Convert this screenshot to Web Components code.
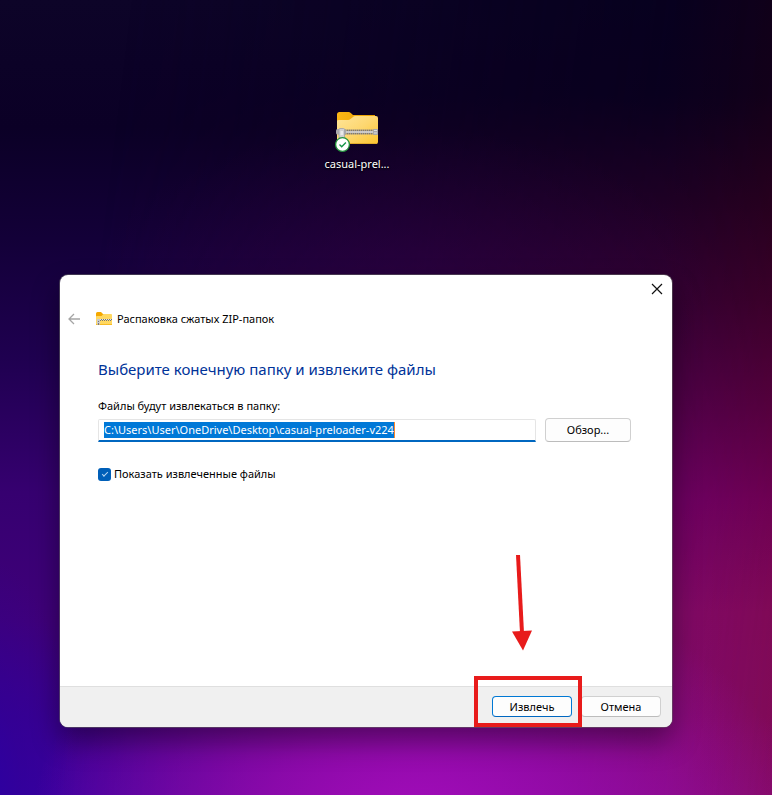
<!DOCTYPE html>
<html lang="ru">
<head>
<meta charset="utf-8">
<title>Распаковка сжатых ZIP-папок</title>
<style>
  body { margin: 0; font-family: "Noto Sans", "Open Sans", sans-serif; font-size: 11px; line-height: 16px; color: #000; }
</style>
</head>
<body>
<desk-top>
  <desktop-icon slot="icons" label="casual-prel..."></desktop-icon>
  <extract-wizard heading="Распаковка сжатых ZIP-папок"></extract-wizard>
</desk-top>

<script>
const define = (name, html, setup) => {
  const template = document.createElement('template');
  template.innerHTML = html;
  customElements.define(name, class extends HTMLElement {
    constructor() {
      super();
      this.attachShadow({ mode: 'open', delegatesFocus: true }).append(template.content.cloneNode(true));
    }
    connectedCallback() { if (setup) setup(this, this.shadowRoot); }
  });
};

define('zip-folder', `
  <style>
    :host { display: block; width: 44px; height: 44px; flex: none; }
    svg { display: block; width: 100%; height: 100%; }
    .small { display: none; }
    :host([small]) { width: 16px; height: 16px; }
    :host([small]) .large { display: none; }
    :host([small]) .small { display: block; }
  </style>
  <svg class="large" viewBox="0 0 44 44" aria-hidden="true">
    <defs>
      <linearGradient id="face" x1="0" y1="0" x2="1" y2="1"><stop offset="0" stop-color="#ffe59a"/><stop offset=".5" stop-color="#fdd770"/><stop offset="1" stop-color="#fcc52f"/></linearGradient>
      <linearGradient id="back" x1="0" y1="0" x2="1" y2="0"><stop offset="0" stop-color="#fbb616"/><stop offset="1" stop-color="#e9a000"/></linearGradient>
    </defs>
    <path d="M2 5.500Q2 3 4.500 3H13.500Q14.800 3 15.800 4L18 6H40V30H2Z" fill="url(#back)"/>
    <path d="M2 12Q2 11 4 11H13Q14.500 11 15.500 10L18 8Q19 7 20 7H41Q43 7 43 9V33Q43 35 41 35H4Q2 35 2 33Z" fill="url(#face)"/>
    <path d="M4 34.500H42" stroke="#e3ad2c" stroke-width="1"/>
    <rect x="3" y="20.500" width="40" height="5" fill="#b8a276"/>
    <path d="M10 21.500H39M10 24.500H39" stroke="#77777d" stroke-width="1.500" stroke-dasharray="1 1"/>
    <path d="M10 23H39" stroke="#cfcfd2" stroke-width="1.800"/>
    <rect x="38" y="20" width="5" height="6" rx="1" fill="#a7a7ab"/>
    <path d="M39 21.500H42M39 24H42" stroke="#dededf"/>
    <rect x="1" y="20" width="10" height="5.500" rx="1.500" fill="#a9a9ad"/>
    <path d="M4 20.500Q4 19.500 5 19.500H8.500Q9.500 19.500 9.500 20.500V29H4Z" fill="#cfcfd2" stroke="#a1a1a6" stroke-width=".8"/>
    <path d="M5.500 22H8V26H5.500Z" fill="#e9e9ea"/>
    <circle cx="7.500" cy="35.500" r="6.900" fill="#fff" stroke="#21913b" stroke-width="1.300"/>
    <path d="M4.500 35.600L6.700 37.800L10.900 33.600" fill="none" stroke="#159447" stroke-width="1.400"/>
  </svg>
  <svg class="small" viewBox="0 0 16 16" aria-hidden="true">
    <path d="M0 2.500Q0 1 1.500 1H5L7 3H15V8H0Z" fill="#f5a800"/>
    <path d="M0 5.500Q0 5 1 5H5.500L7.500 3H15Q16 3 16 4V13Q16 14 15 14H1Q0 14 0 13Z" fill="#ffd861"/>
    <path d="M0 13.500H16" stroke="#f7bb25"/>
    <path d="M1 8.500H16M2 9.500H16" stroke="#77777a" stroke-dasharray="1 1"/>
    <path d="M1 8.500H16" stroke="#e5e5e5" stroke-dasharray="1 1" stroke-dashoffset="1"/>
    <path d="M1 8H4V13L3 14H2L1 13Z" fill="#cacacc"/><path d="M2 10H3V11H2ZM2 12H3V14H2Z" fill="#77777b"/>
  </svg>`);

define('desktop-icon', `
  <style>
    :host { display: block; width: 74px; }
    button { display: flex; flex-direction: column; align-items: center; gap: 3px; width: 100%; padding: 0; border: 0; background: none; color: #fff; font: inherit; text-shadow: 0 1px 2px #000, 0 0 2px #000; }
  </style>
  <button type="button"><zip-folder></zip-folder><span></span></button>`,
  (host, root) => { root.querySelector('span').textContent = host.getAttribute('label'); });

define('desk-top', `
  <style>
    :host {
      display: flex; flex-direction: column; box-sizing: border-box; min-height: 100vh;
      position: relative; isolation: isolate;
      padding: 109px 100px 68px 60px; overflow: hidden;
      background: linear-gradient(#0d0428 0%, #0b0026 16%, #130038 30%, #1f0050 45%, #360070 62%, #3f007a 78%, #3a0090 90%, #3900a0 100%);
    }
    :host::before, :host::after { content: ""; position: absolute; inset: 0; z-index: -1; }
    :host::before {
      background:
        linear-gradient(90deg, #0000 86%, #50000026 100%),
        linear-gradient(#06001c 0%, #09001c 12%, #210021 25%, #3a002e 38%, #580045 51%, #76005f 63%, #8a0a64 77%, #8a0b66 90%, #8e0c76 100%);
      mask-image: linear-gradient(97deg, #0000 15%, #0009 60%, #000 100%);
    }
    :host::after {
      background:
        radial-gradient(ellipse 50% 32% at 54% 104%, #a40cbc 0%, #9c0bb4bb 40%, #8a0aa000 100%),
        radial-gradient(ellipse 12% 30% at -2% 100%, #2c00a0 0%, #2c009877 40%, #2a009000 100%),
        radial-gradient(ellipse 40% 20% at 52% 36%, #30005055 0%, #30004000 100%);
    }
    .icons { display: flex; min-height: 166px; padding-left: 260px; box-sizing: border-box; }
    ::slotted(extract-wizard) { flex: 1; }
  </style>
  <div class="icons"><slot name="icons"></slot></div>
  <slot></slot>`);

define('push-button', `
  <style>
    :host { display: block; position: relative; }
    button { display: block; box-sizing: border-box; width: 100%; height: 100%; padding: 0 8px; border: 1px solid #d0d0d0; border-bottom-color: #bcbcbc; border-radius: 4px; background: #fdfdfd; font: inherit; color: #000; }
    :host([default]) button { border-color: #0078d4; border-bottom-color: #0067c0; }
  </style>
  <button type="button"><slot></slot></button>`);

define('path-field', `
  <style>
    :host { display: flex; flex-direction: column; gap: 4px; }
    .row { display: flex; gap: 9px; align-items: flex-start; }
    .box { flex: 1; display: flex; box-sizing: border-box; height: 23px; margin-top: 1px; padding: 2px 5px 0; border: 1px solid #e5e5e5; border-bottom: 2px solid #0067c0; border-radius: 2px 2px 0 0; background: #fff; }
    input { field-sizing: content; box-sizing: content-box; height: 16px; line-height: 16px; margin: 0; padding: 0; border: 0; border-right: 1px solid #ff8728; outline: 0; background: #0078d7; font: inherit; color: #fff; }
    input::selection { background: #0078d7; color: #fff; }
    push-button { width: 86px; height: 24px; }
  </style>
  <label for="path">Файлы будут извлекаться в папку:</label>
  <div class="row">
    <div class="box"><input id="path" type="text" spellcheck="false" value="C:\\Users\\User\\OneDrive\\Desktop\\casual-preloader-v224"></div>
    <push-button>Обзор...</push-button>
  </div>`,
  (host, root) => { const input = root.querySelector('input'); input.focus(); input.select(); });

define('check-option', `
  <style>
    :host { display: block; }
    label { display: flex; align-items: center; gap: 3px; }
    input { appearance: none; display: grid; place-items: center; width: 13px; height: 13px; margin: 0; border-radius: 3px; background: #005fb8; }
    input:checked::before { content: ""; width: 5px; height: 2px; margin-bottom: 2px; border: solid #b8d8f4; border-width: 0 0 1px 1px; transform: rotate(-45deg); }
  </style>
  <label><input type="checkbox" checked><span><slot></slot></span></label>`);

define('callout-mark', `
  <style>
    :host { position: absolute; inset: -20px -10px -10px -18px; z-index: 2; border: 4px solid #e81b1b; pointer-events: none; }
    svg { position: absolute; left: 32px; bottom: 70px; width: 24px; height: 100px; overflow: visible; }
  </style>
  <svg viewBox="0 0 24 100" aria-hidden="true"><path d="M8 2L12 80" stroke="#e81b1b" stroke-width="4"/><path d="M2 78.500L22 77.500L13 97.500Z" fill="#e81b1b"/></svg>`);

define('extract-wizard', `
  <style>
    :host { display: flex; flex-direction: column; border-radius: 8px; background: #fff; box-shadow: 0 0 0 1px #6668, 0 14px 28px #0006; }
    .title { display: flex; justify-content: flex-end; height: 28px; }
    .title button { width: 30px; }
    button { display: grid; place-items: center; padding: 0; border: 0; background: none; }
    header { display: flex; align-items: center; height: 32px; padding-left: 6px; }
    header button { width: 16px; height: 16px; margin-right: 14px; }
    header span { margin-left: 5px; }
    main { flex: 1; display: flex; flex-direction: column; padding: 23px 41px 24px 38px; }
    h1 { margin: 0; font-size: 15px; line-height: 22px; font-weight: 400; color: #003399; }
    path-field { margin: 18px 0 24px; }
    footer { display: flex; justify-content: flex-end; gap: 9px; padding: 9px 11px 10px; border-top: 1px solid #dfdfdf; border-radius: 0 0 8px 8px; background: #f0f0f0; }
    footer push-button { width: 80px; height: 21px; }
  </style>
  <div class="title"><button type="button" aria-label="Закрыть"><svg width="12" height="12" viewBox="0 0 12 12"><path d="M1 1L11 11M11 1L1 11" stroke="#111" stroke-width="1.200"/></svg></button></div>
  <header>
    <button type="button" aria-label="Назад" disabled><svg width="14" height="12" viewBox="0 0 14 12"><path d="M13 6H2M7 1L2 6L7 11" fill="none" stroke="#a5a5a5" stroke-width="1.300"/></svg></button>
    <zip-folder small></zip-folder><span id="heading"></span>
  </header>
  <main>
    <h1>Выберите конечную папку и извлеките файлы</h1>
    <path-field></path-field>
    <check-option>Показать извлеченные файлы</check-option>
  </main>
  <footer>
    <push-button default>Извлечь</push-button>
    <push-button>Отмена</push-button>
  </footer>`,
  (host, root) => {
    root.getElementById('heading').textContent = host.getAttribute('heading');
    root.querySelector('push-button[default]').shadowRoot.append(document.createElement('callout-mark'));
  });
</script>
</body>
</html>
